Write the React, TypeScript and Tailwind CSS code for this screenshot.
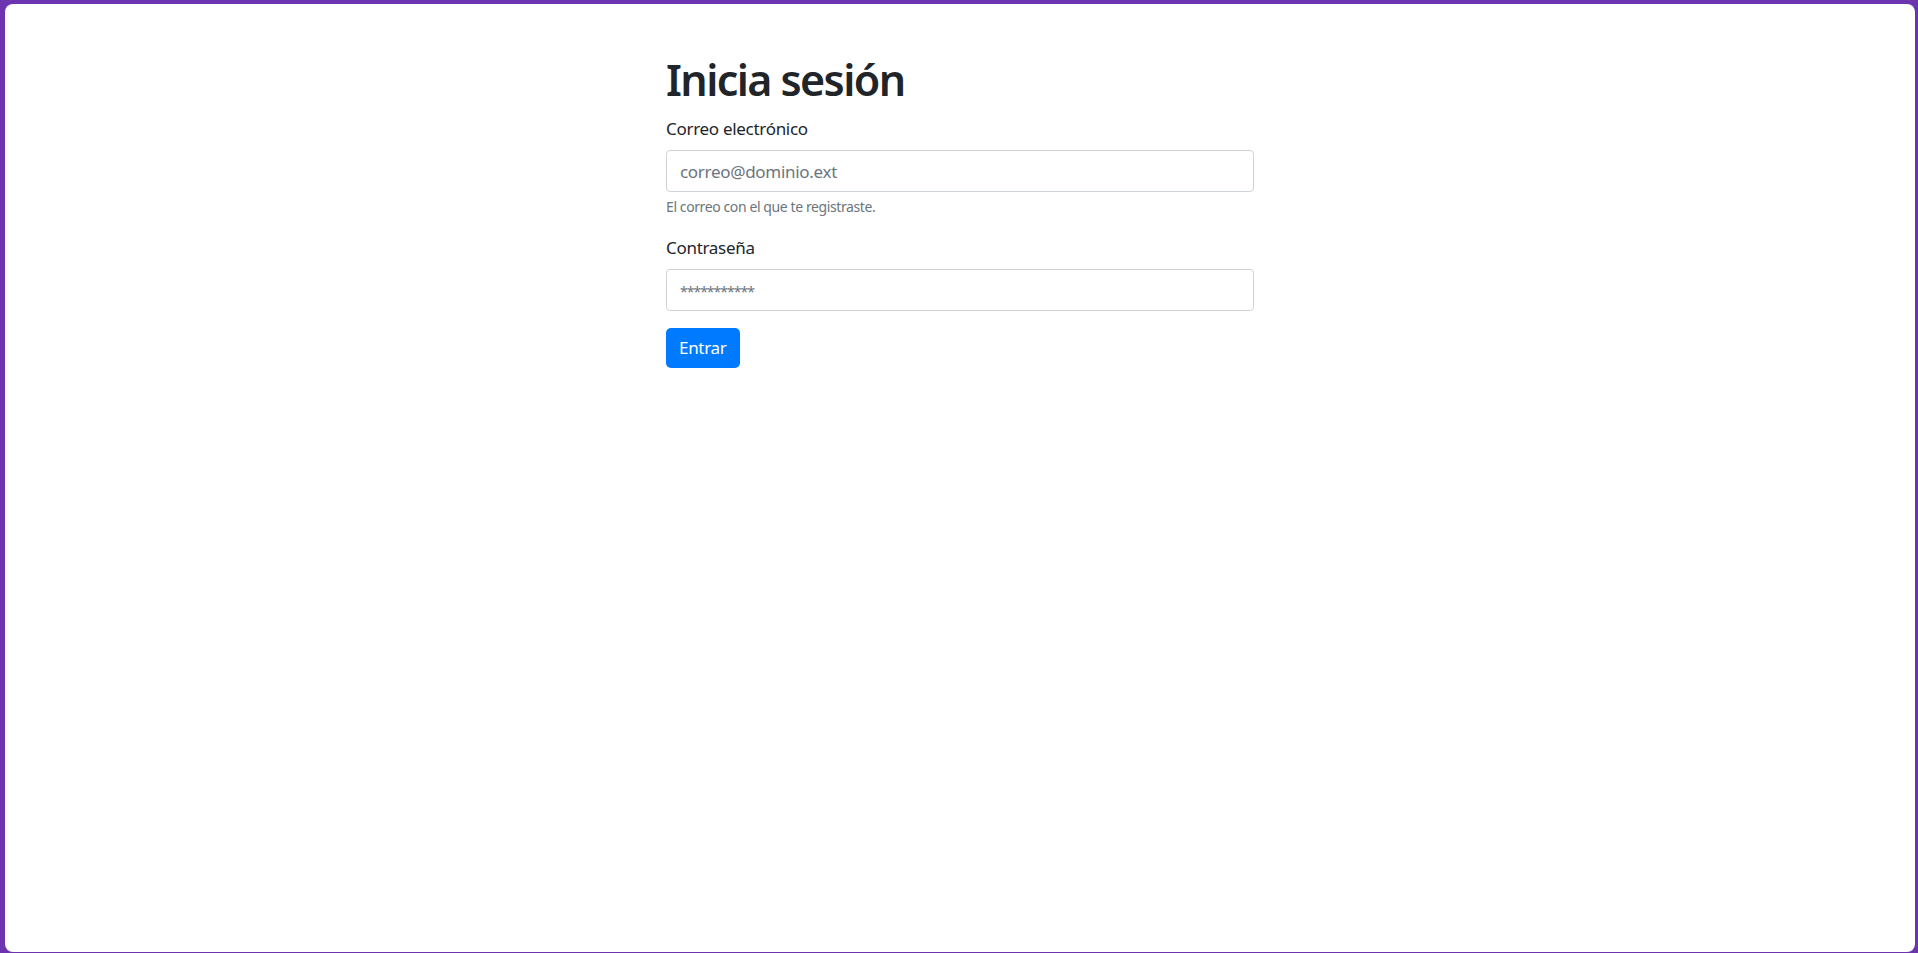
export default function App() {
  return (
    <div className="h-[953px] w-full bg-[#6c34af] pl-[5px] pr-[3px] pt-[4px] pb-[1px] font-['Noto_Sans',sans-serif]">
      <div className="h-full w-full rounded-[8px] bg-white">
        <div className="mx-auto w-[588px] pt-[49px]">
          <h1 className="mb-[10px] text-[43px] font-semibold leading-[53px] tracking-[-1.6px] text-[#212529]">
            Inicia sesión
          </h1>

          <form className="flex flex-col" onSubmit={(e) => e.preventDefault()}>
            <div className="mb-[18px] flex flex-col">
              <label htmlFor="email" className="mb-[8px] text-[17px] leading-[26px] tracking-[-0.3px] text-[#212529]">
                Correo electrónico
              </label>
              <input
                id="email"
                type="email"
                placeholder="correo@dominio.ext"
                className="h-[42px] w-full rounded-[4px] border border-[#ced4da] px-[13px] text-[17px] tracking-[-0.3px] text-[#495057] outline-none placeholder:text-[#6c757d]"
              />
              <small className="mt-[4px] text-[14px] leading-[21px] tracking-[-0.4px] text-[#6c757d]">
                El correo con el que te registraste.
              </small>
            </div>

            <div className="mb-[17px] flex flex-col">
              <label htmlFor="password" className="mb-[8px] text-[17px] leading-[26px] tracking-[-0.3px] text-[#212529]">
                Contraseña
              </label>
              <input
                id="password"
                type="password"
                placeholder="***********"
                className="h-[42px] w-full rounded-[4px] border border-[#ced4da] px-[13px] text-[17px] tracking-[-1px] text-[#495057] outline-none placeholder:text-[14px] placeholder:text-[#6c757d]"
              />
            </div>

            <div>
              <button
                type="submit"
                className="h-[40px] rounded-[5px] bg-[#007bff] px-[13px] text-[17px] tracking-[-0.3px] text-white"
              >
                Entrar
              </button>
            </div>
          </form>
        </div>
      </div>
    </div>
  );
}
